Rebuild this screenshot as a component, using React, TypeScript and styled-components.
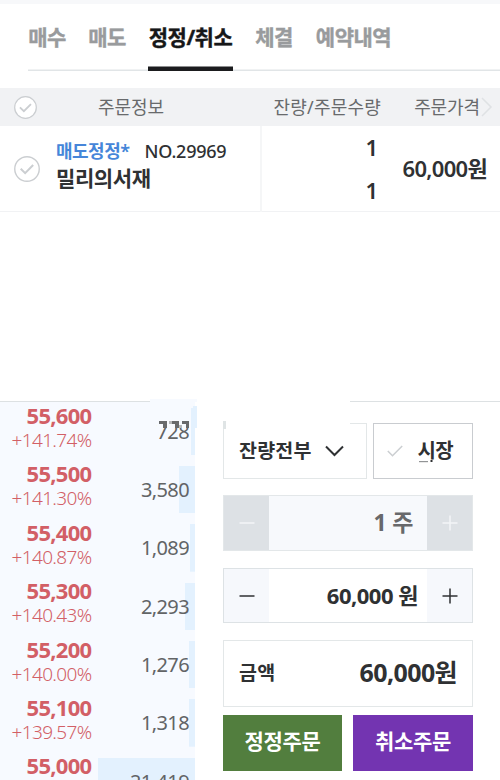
import React from 'react';
import styled, { createGlobalStyle } from 'styled-components';

const GlobalStyle = createGlobalStyle`
  * { box-sizing: border-box; }
  body { margin: 0; background: #fff; }
  button { font: inherit; border: 0; padding: 0; background: none; }
`;

const Page = styled.main`
  width: 500px;
  height: 780px;
  overflow: hidden;
  display: flex;
  flex-direction: column;
  background: #fff;
  color: #2f3133;
  font-family: 'Noto Sans', 'Noto Sans CJK KR', sans-serif;
  line-height: 1.4;
  white-space: nowrap;
`;

const TopStrip = styled.div`
  flex: 0 0 4px;
  background: #f7f8fa;
`;

const Tabs = styled.nav`
  flex: none;
  height: 67px;
  margin-left: 28px;
  display: flex;
  box-shadow: inset 0 -1.5px #e1e5e7;
`;

const Tab = styled.button<{ $active?: boolean; $width: number; $gap: number }>`
  width: ${(p) => p.$width}px;
  height: 67px;
  margin-right: ${(p) => p.$gap}px;
  display: flex;
  justify-content: center;
  font-size: 21px;
  font-weight: 700;
  line-height: 66px;
  letter-spacing: -0.5px;
  -webkit-text-stroke: 0.4px currentColor;
  color: ${(p) => (p.$active ? '#161718' : '#999b9d')};
  box-shadow: ${(p) => (p.$active ? 'inset 0 -4.5px #1b1c1e' : 'none')};
`;

const Orders = styled.section`
  flex: none;
  height: 314px;
  padding-top: 17px;
`;

const HeadRow = styled.div`
  height: 38px;
  display: grid;
  grid-template-columns: 50px 162px 169px 119px;
  align-items: center;
  background: #f1f2f4;
  font-size: 18px;
  line-height: 38px;
  letter-spacing: -0.1px;
  color: #686a6c;
`;

const HeadCell = styled.span<{ $end?: boolean; $spacing?: number }>`
  display: flex;
  align-items: center;
  justify-content: ${(p) => (p.$end ? 'flex-end' : 'center')};
  letter-spacing: ${(p) => p.$spacing ?? -0.1}px;
`;

const HeadArrow = styled.svg`
  flex: none;
  margin: 0 7px 0 1px;
`;

const OrderRow = styled.div`
  height: 86px;
  display: grid;
  grid-template-columns: 56px 206px 116px 122px;
  border-bottom: 1.5px solid #f1f2f4;
`;

const CheckCell = styled.div`
  display: flex;
  align-items: center;
  padding-left: 13.5px;
`;

const OrderInfo = styled.div`
  padding-top: 12px;
  border-right: 2px solid #f5f6f7;
`;

const OrderMeta = styled.div`
  display: flex;
  gap: 15px;
  height: 26px;
  line-height: 26px;
  font-size: 18px;
  font-weight: 500;
  letter-spacing: -0.25px;
`;

const OrderType = styled.span`
  color: #4686d9;
  font-weight: 600;
  letter-spacing: -0.5px;
`;

const StockName = styled.div`
  height: 28px;
  line-height: 28px;
  font-size: 21px;
  font-weight: 600;
  letter-spacing: -0.4px;
`;

const Counts = styled.div`
  display: flex;
  flex-direction: column;
  align-items: flex-end;
  font-size: 22px;
  font-weight: 600;
  line-height: 43px;
`;

const OrderPrice = styled.div`
  padding-right: 13px;
  text-align: right;
  font-size: 22px;
  font-weight: 600;
  line-height: 85px;
  letter-spacing: -0.7px;
`;

const Trading = styled.section`
  flex: 1;
  display: grid;
  grid-template-columns: 150px 200px 150px;
  grid-template-rows: 17px 378px;
`;

const BookRule = styled.div`
  height: 17px;
  background: linear-gradient(#fff 15.5px, #dde1e3 15.5px);
`;

const SeamGap = styled.div`
  height: 17px;
  background: linear-gradient(90deg, #f7faff 47px, #fff 47px) 0 14px no-repeat;
`;

const TradingBody = styled.div`
  grid-column: 1 / -1;
  display: flex;
`;

const Book = styled.div`
  width: 195px;
  height: 378px;
  background: #f7faff;
`;

const BookRow = styled.div`
  height: 58.4px;
  display: flex;
  justify-content: space-between;
`;

const Quote = styled.div`
  width: 91.5px;
  text-align: right;
  color: #d25f66;
`;

const QuotePrice = styled.div`
  height: 27px;
  line-height: 27px;
  font-size: 22px;
  font-weight: 700;
  letter-spacing: -0.7px;
`;

const QuoteRate = styled.div`
  height: 22px;
  line-height: 22px;
  font-size: 19px;
  font-weight: 350;
  letter-spacing: -0.65px;
`;

const Volume = styled.div<{ $bar: number }>`
  width: 97.5px;
  height: 47.4px;
  margin-top: 5.5px;
  padding-right: 6px;
  text-align: right;
  line-height: 47px;
  font-size: 20px;
  font-weight: 400;
  letter-spacing: -0.6px;
  color: #626466;
  background: linear-gradient(#e3f1fe, #e3f1fe) right / ${(p) => p.$bar}px 100% no-repeat;
`;

const Overlap = styled.svg`
  position: absolute;
  left: 150px;
  top: 4px;
`;

const BookWrap = styled.div`
  position: relative;
  width: 223px;
`;

const Form = styled.form`
  position: relative;
  width: 250px;
  padding-top: 4px;
`;

const Line = styled.div<{ $top: number; $height: number; $gap?: number }>`
  display: flex;
  gap: ${(p) => p.$gap ?? 0}px;
  height: ${(p) => p.$height}px;
  margin-top: ${(p) => p.$top}px;
`;

const Select = styled.button`
  width: 144px;
  border: 1.5px solid #e3e7e8;
  display: flex;
  align-items: center;
  justify-content: space-between;
  padding: 0 22px 0 15px;
  font-size: 19.5px;
  font-weight: 600;
  letter-spacing: 0.2px;
  color: #2f3133;
`;

const Market = styled.button`
  position: relative;
  width: 100px;
  border: 1px solid #c9ccd0;
  display: flex;
  align-items: center;
  justify-content: space-between;
  padding: 0 19px 0 13px;
  font-size: 20px;
  font-weight: 600;
  letter-spacing: -0.6px;
  color: #2f3133;
`;

const SelectSeam = styled.div`
  position: absolute;
  left: 0;
  top: 19px;
  width: 127px;
  height: 6px;
  background: #fff;
`;

const SeamTick = styled.i`
  position: absolute;
  left: 0;
  top: 19px;
  width: 3px;
  height: 8px;
  background: #dfe4e5;
`;

const MarketMark = styled.svg`
  position: absolute;
  left: 45px;
  top: 36px;
`;

const Stepper = styled.div<{ $disabled?: boolean }>`
  flex: 1;
  display: grid;
  grid-template-columns: 45px 1fr 45px;
  border: 1px solid ${(p) => (p.$disabled ? '#e3e7e9' : '#dde2e5')};
  color: ${(p) => (p.$disabled ? '#68696b' : '#2f3133')};
  background: ${(p) => (p.$disabled ? '#f7f9fc' : '#fff')};
`;

const StepButton = styled.button<{ $disabled?: boolean }>`
  display: grid;
  place-items: center;
  background: ${(p) => (p.$disabled ? '#dde1e5' : '#f6f8fc')};
  color: ${(p) => (p.$disabled ? '#f3f5f7' : '#2f3133')};
`;

const StepValue = styled.div<{ $pad: number; $spacing: number; $size: number }>`
  padding-right: ${(p) => p.$pad}px;
  text-align: right;
  font-size: ${(p) => p.$size}px;
  font-weight: 700;
  line-height: 52px;
  letter-spacing: ${(p) => p.$spacing}px;
`;

const Amount = styled.div`
  flex: 1;
  display: flex;
  align-items: center;
  justify-content: space-between;
  border: 1.5px solid #e3e7e8;
  padding: 0 15px 2px;
`;

const AmountLabel = styled.span`
  font-size: 19.5px;
  font-weight: 600;
  letter-spacing: 0.2px;
`;

const AmountValue = styled.strong`
  font-size: 25px;
  font-weight: 700;
  letter-spacing: -0.6px;
`;

const Submit = styled.button<{ $color: string; $width: number }>`
  width: ${(p) => p.$width}px;
  padding-bottom: 2px;
  background: ${(p) => p.$color};
  color: #fff;
  font-size: 21px;
  font-weight: 700;
  letter-spacing: -0.3px;
`;

const CircleCheck = ({ size }: { size: number }) => (
  <svg width={size} height={size} viewBox="0 0 24 24" fill="none" stroke="#cbced1">
    <circle cx="12" cy="12" r="11.3" fill="#fff" strokeWidth="1.3" />
    <path d="M6.2 11.8l4.1 4 7.4-7.4" strokeWidth="1.9" />
  </svg>
);

const StepIcon = ({ plus }: { plus?: boolean }) => (
  <svg width="16" height="16" viewBox="0 0 16 16" stroke="currentColor" strokeWidth="1.5">
    <path d={plus ? 'M.5 8h15M8 .5v15' : 'M.5 8h15'} />
  </svg>
);

const tabs = [
  { label: '매수', width: 38, gap: 22 },
  { label: '매도', width: 38, gap: 22 },
  { label: '정정/취소', width: 85, gap: 22 },
  { label: '체결', width: 38, gap: 22 },
  { label: '예약내역', width: 77, gap: 0 },
];

const quotes = [
  { price: '55,600', rate: '+141.74%', volume: '728', bar: 4 },
  { price: '55,500', rate: '+141.30%', volume: '3,580', bar: 16.5 },
  { price: '55,400', rate: '+140.87%', volume: '1,089', bar: 5.5 },
  { price: '55,300', rate: '+140.43%', volume: '2,293', bar: 10.5 },
  { price: '55,200', rate: '+140.00%', volume: '1,276', bar: 6 },
  { price: '55,100', rate: '+139.57%', volume: '1,318', bar: 6 },
  { price: '55,000', rate: '', volume: '21,419', bar: 97.5 },
];

export default function App() {
  return (
    <Page>
      <GlobalStyle />
      <TopStrip />
      <Tabs>
        {tabs.map((t) => (
          <Tab key={t.label} type="button" $active={t.label === '정정/취소'} $width={t.width} $gap={t.gap}>
            {t.label}
          </Tab>
        ))}
      </Tabs>
      <Orders>
        <HeadRow>
          <CheckCell><CircleCheck size={23} /></CheckCell>
          <HeadCell>주문정보</HeadCell>
          <HeadCell $end $spacing={0.2}>잔량/주문수량</HeadCell>
          <HeadCell $end>
            주문가격
            <HeadArrow width="12" height="20" viewBox="0 0 12 20" fill="none" stroke="#dfe1e4" strokeWidth="1.5">
              <path d="M1 1l9 9-9 9" />
            </HeadArrow>
          </HeadCell>
        </HeadRow>
        <OrderRow>
          <CheckCell><CircleCheck size={26} /></CheckCell>
          <OrderInfo>
            <OrderMeta>
              <OrderType>매도정정*</OrderType>
              <span>NO.29969</span>
            </OrderMeta>
            <StockName>밀리의서재</StockName>
          </OrderInfo>
          <Counts>
            <span>1</span>
            <span>1</span>
          </Counts>
          <OrderPrice>60,000원</OrderPrice>
        </OrderRow>
      </Orders>
      <Trading>
        <BookRule />
        <SeamGap />
        <BookRule />
        <TradingBody>
          <BookWrap>
            <Book>
              {quotes.map((q) => (
                <BookRow key={q.price}>
                  <Quote>
                    <QuotePrice>{q.price}</QuotePrice>
                    {q.rate && <QuoteRate>{q.rate}</QuoteRate>}
                  </Quote>
                  <Volume $bar={q.bar}>{q.volume}</Volume>
                </BookRow>
              ))}
            </Book>
            <Overlap width="48" height="28">
              <path d="M43 0h4v22h-4z" fill="#e3f1fe" />
              <path d="M7 14h34v8H7z" fill="#f7faff" />
              <path d="M9 15h8v7h-4v-4H9zM22 15h7v7h-4v-4h-3zM32 15h7v7h-3v-4h-4z" fill="#686a6c" />
              <path d="M19 15h3v3h-3zM29 19h3v3h-3z" fill="#b6b8ba" />
            </Overlap>
          </BookWrap>
          <Form>
            <Line $top={17} $height={56} $gap={6}>
              <Select type="button">
                잔량전부
                <svg width="19" height="12" viewBox="0 0 19 12" fill="none" stroke="#2f3133" strokeWidth="2">
                  <path d="M1 1.5l8.5 8.5L18 1.5" />
                </svg>
              </Select>
              <Market type="button">
                <svg width="16" height="12" viewBox="0 0 16 12" fill="none" stroke="#cbced1" strokeWidth="1.5">
                  <path d="M.8 6l4.7 4.7L15.2 1" />
                </svg>
                시장
                <MarketMark width="16" height="4" viewBox="0 0 16 4">
                  <path d="M0 1h9v1.2H0z" fill="#929496" />
                  <path d="M11.5 0h2v2h-2z" fill="#2f3133" />
                </MarketMark>
              </Market>
            </Line>
            <Line $top={16} $height={56}>
              <Stepper $disabled>
                <StepButton type="button" $disabled><StepIcon /></StepButton>
                <StepValue $pad={14} $spacing={-0.3} $size={23}>1 주</StepValue>
                <StepButton type="button" $disabled><StepIcon plus /></StepButton>
              </Stepper>
            </Line>
            <Line $top={17} $height={55}>
              <Stepper>
                <StepButton type="button"><StepIcon /></StepButton>
                <StepValue $pad={9} $spacing={-0.5} $size={22}>60,000 원</StepValue>
                <StepButton type="button"><StepIcon plus /></StepButton>
              </Stepper>
            </Line>
            <Line $top={17} $height={67}>
              <Amount>
                <AmountLabel>금액</AmountLabel>
                <AmountValue>60,000원</AmountValue>
              </Amount>
            </Line>
            <Line $top={8} $height={56} $gap={11}>
              <Submit type="button" $color="#527e3e" $width={119}>정정주문</Submit>
              <Submit type="button" $color="#7334b1" $width={120}>취소주문</Submit>
            </Line>
            <SelectSeam />
            <SeamTick />
          </Form>
        </TradingBody>
      </Trading>
    </Page>
  );
}
